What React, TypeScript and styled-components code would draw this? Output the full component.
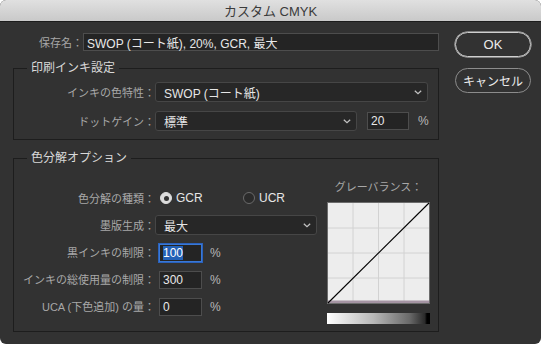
import styled, { createGlobalStyle } from "styled-components";

const GlobalStyle = createGlobalStyle`
  html, body {
    margin: 0;
    padding: 0;
    background: #ffffff;
  }
  body {
    font-family: "Liberation Sans", "Noto Sans CJK JP", sans-serif;
  }
`;

const Window = styled.div`
  width: 541px;
  height: 344px;
  display: flex;
  flex-direction: column;
  background: #323232;
  border-radius: 6px;
  overflow: hidden;
`;

const TitleBar = styled.div`
  height: 21px;
  flex: none;
  display: flex;
  align-items: center;
  justify-content: center;
  background: linear-gradient(#e0e0e0, #c9c9c9);
  border-bottom: 1px solid #1c1c1c;
  color: #3b3b3b;
  font-size: 13px;
`;

const Body = styled.div`
  display: flex;
  gap: 16px;
  padding: 0 10px 0 13px;
`;

const Main = styled.div`
  width: 426px;
  display: flex;
  flex-direction: column;
  padding-top: 11px;
`;

const Side = styled.div`
  width: 76px;
  display: flex;
  flex-direction: column;
  gap: 11px;
  padding-top: 10px;
`;

const PillButton = styled.button<{ $primary?: boolean }>`
  height: 25px;
  padding: 0;
  border-radius: 13px;
  background: transparent;
  border: 1px solid ${(p) => (p.$primary ? "#cfcfcf" : "#8c8c8c")};
  box-shadow: ${(p) => (p.$primary ? "0 0 0 0.5px #cfcfcf" : "none")};
  color: #ececec;
  font-family: inherit;
  font-size: ${(p) => (p.$primary ? "13px" : "12px")};
`;

const NameRow = styled.div`
  display: grid;
  grid-template-columns: 70px 1fr;
  align-items: center;
  height: 18px;
`;

const Label = styled.span`
  color: #a8a8a8;
  font-size: 11px;
  text-align: right;
  white-space: nowrap;
`;

const TextBox = styled.div<{ $width?: number; $focus?: boolean }>`
  box-sizing: border-box;
  height: 18px;
  width: ${(p) => (p.$width ? `${p.$width}px` : "auto")};
  display: flex;
  align-items: center;
  padding: 0 3px;
  background: #242424;
  border: 1px solid ${(p) => (p.$focus ? "#3a78d6" : "#4d4d4d")};
  box-shadow: ${(p) => (p.$focus ? "0 0 0 1px #2a62bd" : "none")};
  color: #e8e8e8;
  font-size: 12px;
  white-space: nowrap;
`;

const Highlight = styled.span`
  background: #2461b6;
  color: #ffffff;
`;

const Group = styled.fieldset<{ $top?: number }>`
  margin: ${(p) => p.$top ?? 0}px 0 0 0;
  padding: 0;
  min-width: 0;
  border: 1px solid #1d1d1d;
`;

const Legend = styled.legend`
  margin-left: 13px;
  padding: 0 4px;
  font-size: 12px;
  line-height: 14px;
  color: #d9d9d9;
`;

const InkRows = styled.div`
  display: grid;
  grid-template-columns: 141px 1fr;
  row-gap: 9px;
  padding: 7px 10px 8px 0;
  align-items: center;
`;

const Select = styled.div<{ $width: number }>`
  box-sizing: border-box;
  width: ${(p) => p.$width}px;
  height: 20px;
  display: flex;
  align-items: center;
  justify-content: space-between;
  padding: 0 5px 0 8px;
  background: #272727;
  border: 1px solid #464646;
  border-radius: 3px;
  color: #e6e6e6;
  font-size: 12px;
`;

const Controls = styled.div`
  display: flex;
  align-items: center;
`;

const Percent = styled.span<{ $gap: number }>`
  margin-left: ${(p) => p.$gap}px;
  color: #b8b8b8;
  font-size: 12px;
`;

const SeparationBody = styled.div`
  display: flex;
  gap: 10px;
  padding: 0 8px 0 0;
`;

const SepRows = styled.div`
  display: grid;
  grid-template-columns: 141px 162px;
  grid-auto-rows: 20px;
  row-gap: 7px;
  padding: 23px 0 15px 0;
  align-items: center;
`;

const InputCell = styled.div`
  display: flex;
  align-items: center;
  align-self: end;
  padding-left: 4px;
`;

const RadioGroup = styled.div`
  display: flex;
  align-items: center;
  padding-left: 5px;
`;

const RadioOption = styled.label<{ $width?: number }>`
  display: flex;
  align-items: center;
  gap: 4px;
  width: ${(p) => (p.$width ? `${p.$width}px` : "auto")};
  color: #e6e6e6;
  font-size: 12px;
`;

const RadioDot = styled.span<{ $on?: boolean }>`
  box-sizing: border-box;
  width: 12px;
  height: 12px;
  border-radius: 50%;
  display: flex;
  align-items: center;
  justify-content: center;
  background: ${(p) => (p.$on ? "#dcdcdc" : "#2b2b2b")};
  border: 1px solid ${(p) => (p.$on ? "#dcdcdc" : "#6a6a6a")};

  &::after {
    content: "";
    display: ${(p) => (p.$on ? "block" : "none")};
    width: 5px;
    height: 5px;
    border-radius: 50%;
    background: #333333;
  }
`;

const BalanceColumn = styled.div`
  width: 103px;
  display: flex;
  flex-direction: column;
  align-items: center;
  padding-top: 15px;
`;

const BalanceLabel = styled.span`
  height: 14px;
  line-height: 14px;
  color: #a8a8a8;
  font-size: 11px;
  white-space: nowrap;
  margin-bottom: 8px;
`;

const GrayBar = styled.div`
  width: 103px;
  height: 11px;
  margin-top: 9px;
  background: linear-gradient(
    to right,
    #ffffff 0%,
    #f2f2f2 8%,
    #b8b8b8 45%,
    #6a6a6a 80%,
    #2a2a2a 95%,
    #000000 97%,
    #000000 100%
  );
`;

const Chevron = () => (
  <svg width="8" height="5" viewBox="0 0 8 5">
    <polyline
      points="0.8,0.8 4,3.8 7.2,0.8"
      fill="none"
      stroke="#c4c4c4"
      strokeWidth="1.2"
    />
  </svg>
);

const BalanceGraph = () => (
  <svg width="103" height="102" viewBox="0 0 103 102">
    <rect x="0.5" y="0.5" width="102" height="101" fill="#ededed" stroke="#6c6c6c" />
    {[26, 51.5, 77].map((x) => (
      <line key={`v${x}`} x1={x} y1="1" x2={x} y2="101" stroke="#d2d2d2" />
    ))}
    {[26, 51, 76].map((y) => (
      <line key={`h${y}`} x1="1" y1={y} x2="102" y2={y} stroke="#d2d2d2" />
    ))}
    <rect x="1" y="98.5" width="101" height="2.5" fill="#a594a3" />
    <line x1="1" y1="101" x2="102" y2="1" stroke="#000" strokeWidth="1.1" />
  </svg>
);

const App = () => {
  return (
    <>
      <GlobalStyle />
      <Window>
        <TitleBar>カスタム CMYK</TitleBar>
        <Body>
          <Main>
            <NameRow>
              <Label>保存名：</Label>
              <TextBox>SWOP (コート紙), 20%, GCR, 最大</TextBox>
            </NameRow>

            <Group $top={10}>
              <Legend>印刷インキ設定</Legend>
              <InkRows>
                <Label>インキの色特性：</Label>
                <Select $width={273}>
                  SWOP (コート紙)
                  <Chevron />
                </Select>
                <Label>ドットゲイン：</Label>
                <Controls>
                  <Select $width={202}>
                    標準
                    <Chevron />
                  </Select>
                  <TextBox $width={42} style={{ marginLeft: 10 }}>
                    20
                  </TextBox>
                  <Percent $gap={9}>%</Percent>
                </Controls>
              </InkRows>
            </Group>

            <Group $top={11}>
              <Legend>色分解オプション</Legend>
              <SeparationBody>
                <SepRows>
                  <Label>色分解の種類：</Label>
                  <RadioGroup>
                    <RadioOption $width={83}>
                      <RadioDot $on />
                      GCR
                    </RadioOption>
                    <RadioOption>
                      <RadioDot />
                      UCR
                    </RadioOption>
                  </RadioGroup>

                  <Label>墨版生成：</Label>
                  <Select $width={162}>
                    最大
                    <Chevron />
                  </Select>

                  <Label>黒インキの制限：</Label>
                  <InputCell>
                    <TextBox $width={43} $focus>
                      <Highlight>100</Highlight>
                    </TextBox>
                    <Percent $gap={8}>%</Percent>
                  </InputCell>

                  <Label>インキの総使用量の制限：</Label>
                  <InputCell>
                    <TextBox $width={43}>300</TextBox>
                    <Percent $gap={8}>%</Percent>
                  </InputCell>

                  <Label>UCA (下色追加) の量：</Label>
                  <InputCell>
                    <TextBox $width={43}>0</TextBox>
                    <Percent $gap={8}>%</Percent>
                  </InputCell>
                </SepRows>

                <BalanceColumn>
                  <BalanceLabel>グレーバランス：</BalanceLabel>
                  <BalanceGraph />
                  <GrayBar />
                </BalanceColumn>
              </SeparationBody>
            </Group>
          </Main>

          <Side>
            <PillButton $primary>OK</PillButton>
            <PillButton>キャンセル</PillButton>
          </Side>
        </Body>
      </Window>
    </>
  );
};

export default App;
